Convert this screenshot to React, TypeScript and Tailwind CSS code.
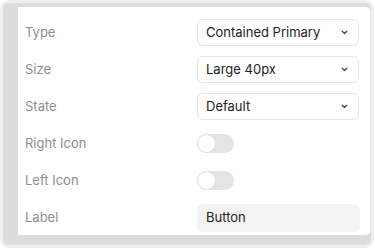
import React from "react";

function Chevron() {
  return (
    <svg width="7" height="5" viewBox="0 0 7 5" fill="none">
      <polyline points="1.2,1.3 3.5,3.5 5.8,1.3" stroke="#444" strokeWidth="1.3" strokeLinecap="round" strokeLinejoin="round" />
    </svg>
  );
}

function Select({ value }: { value: string }) {
  return (
    <div className="flex h-[27px] w-[162px] items-center justify-between rounded-[6px] border border-[#e6e6e6] bg-white pl-[8px] pr-[10px]">
      <span className="text-[13px] text-[#222]">{value}</span>
      <Chevron />
    </div>
  );
}

function Toggle() {
  return (
    <div className="relative h-[19px] w-[37px] rounded-full bg-[#e4e4e4]">
      <div className="absolute left-0 top-0 h-[19px] w-[19px] rounded-full border border-[#e0e0e0] bg-white" />
    </div>
  );
}

function Row({ label, children }: { label: string; children: React.ReactNode }) {
  return (
    <div className="flex h-[27px] items-center">
      <div className="w-[172px] text-[13px] text-[#8e8e8e]">{label}</div>
      {children}
    </div>
  );
}

export default function App() {
  return (
    <div className="bg-white" style={{ fontFamily: "Inter, 'Noto Sans', sans-serif" }}>
      <div className="flex h-[248px] w-[374px] flex-col rounded-[9px] border-[3px] border-[#efefef] bg-[#dcdcdc] pb-[10px] pl-[15px] pt-[4px]">
        <div className="flex flex-1 flex-col gap-[10px] rounded-r-[5px] border-r border-[#e8e8e8] bg-white pl-[7px] pt-[12px]">
          <Row label="Type"><Select value="Contained Primary" /></Row>
          <Row label="Size"><Select value="Large 40px" /></Row>
          <Row label="State"><Select value="Default" /></Row>
          <Row label="Right Icon"><Toggle /></Row>
          <Row label="Left Icon"><Toggle /></Row>
          <Row label="Label">
            <div className="flex h-[28px] w-[163px] items-center rounded-[6px] bg-[#f3f3f3] pl-[9px] text-[13px] text-[#222]">Button</div>
          </Row>
        </div>
      </div>
    </div>
  );
}
